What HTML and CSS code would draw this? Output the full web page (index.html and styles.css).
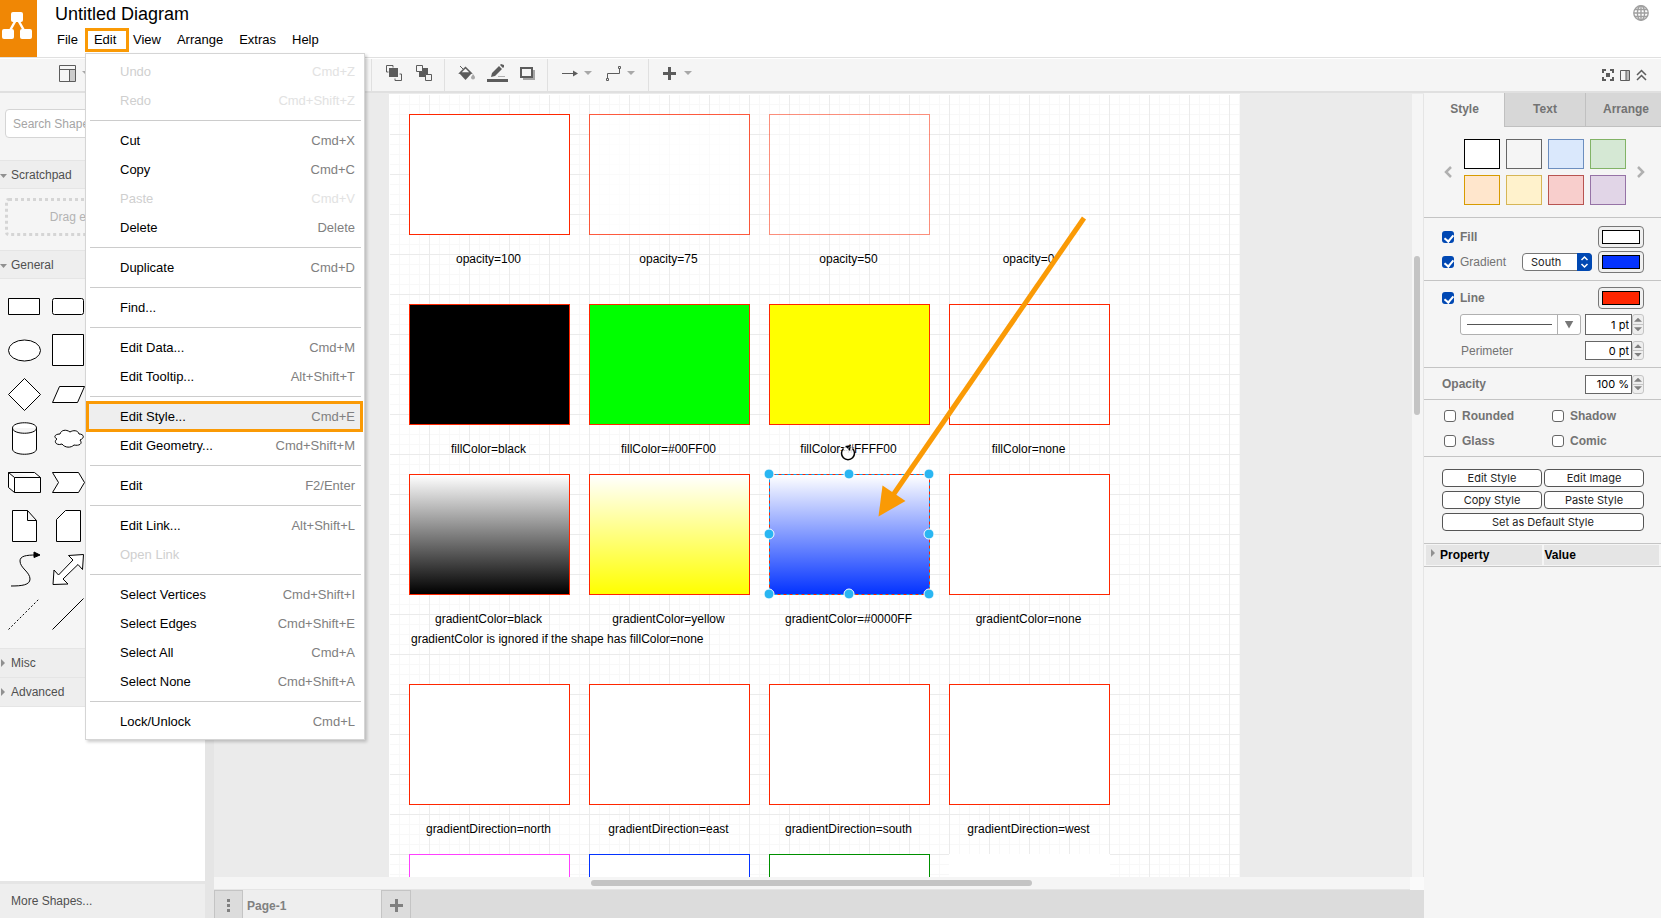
FILE: index.html
```html
<!DOCTYPE html>
<html lang="en">
<head>
<meta charset="utf-8">
<title>Untitled Diagram</title>
<link rel="stylesheet" href="styles.css">
</head>
<body>
<div class="app">
  <header class="header">
    <div class="logo">
      <svg width="37" height="57" viewBox="0 0 37 57"><path d="M17 18 8 34M17 18l9 16" stroke="#fff" stroke-width="2.5"/><g fill="#fff"><rect x="11" y="12" width="12" height="10" rx="2"/><rect x="2" y="29" width="12" height="10" rx="2"/><rect x="20" y="29" width="12" height="10" rx="2"/></g></svg>
    </div>
    <div class="heading">
      <h1 class="doc-title">Untitled Diagram</h1>
      <nav class="menubar">
        <button>File</button><button class="open">Edit</button><button>View</button><button>Arrange</button><button>Extras</button><button>Help</button>
      </nav>
    </div>
    <button class="language" aria-label="Language"><svg width="16" height="16" viewBox="0 0 16 16" fill="none" stroke="#a0a0a0" stroke-width="1.4"><circle cx="8" cy="8" r="7.2"/><ellipse cx="8" cy="8" rx="3.6" ry="7.2"/><path d="M8 1v14M1 8h14M2 4.500h12M2 11.500h12"/></svg></button>
  </header>

  <div class="toolbar">
    <div class="tools first">
      <button aria-label="View"><svg width="17" height="17" viewBox="0 0 17 17"><path d="M11 5h5v11h-5z" fill="#ccc"/><path d="M.5.5h16v16H.5zM.5 4.500h16M10.500 4.500v12" fill="none" stroke="#5c5c5c"/></svg></button>
      <i class="caret"></i>
    </div>
    <div class="tools order">
      <button aria-label="To Front"><svg width="16" height="16" viewBox="0 0 16 16"><path d="M.5 7V.5H7M9 15.500h6.500V9M.5 7h2M7 .5v2M9 15.500v-2M15.500 9h-2" fill="none" stroke="#5c5c5c"/><path d="M3 3h9v9H3z" fill="#5c5c5c"/></svg></button>
      <button aria-label="To Back"><svg width="16" height="16" viewBox="0 0 16 16"><path d="M3 3h9v9H3z" fill="#5c5c5c"/><path d="M.5.5h6v6h-6zM9.500 9.500h6v6h-6z" fill="#f5f5f5" stroke="#5c5c5c"/></svg></button>
    </div>
    <div class="tools paint">
      <button aria-label="Fill Color"><svg width="17" height="16" viewBox="0 0 17 16"><path d="M2 1l3 3" stroke="#5c5c5c"/><path d="M7.500 2.500 13 8H2z" fill="none" stroke="#5c5c5c" stroke-width="1.500"/><path d="M1 8h13l-6.500 7z" fill="#5c5c5c"/><path d="M15 9c1.500 2 2 2.500 2 3.500a2 2 0 0 1-4 0c0-1 1-1.500 2-3.500z" fill="#a8a8a8"/></svg></button>
      <button aria-label="Line Color"><svg width="21" height="18" viewBox="0 0 21 18"><path d="M4 13l1-4 7-7 3 3-7 7zM13 1l1-1 3 1v2l-1 1z" fill="#5c5c5c"/><path d="M11 12.500h7" stroke="#b0b0b0"/><path d="M0 15h21v3H0z" fill="#5c5c5c"/></svg></button>
      <button aria-label="Shadow"><svg width="15" height="13" viewBox="0 0 15 13"><path d="M3 3h12v10H3z" fill="#a5a5a5"/><path d="M1 1h11v9H1z" fill="#f5f5f5" stroke="#5c5c5c" stroke-width="2"/></svg></button>
    </div>
    <div class="tools connect">
      <button aria-label="Connection"><svg width="16" height="7" viewBox="0 0 16 7"><path d="M0 3.500h13" stroke="#5c5c5c"/><path d="M11 0.500l5 3-5 3z" fill="#5c5c5c"/></svg></button>
      <i class="caret"></i>
      <button aria-label="Waypoints"><svg width="15" height="15" viewBox="0 0 15 15" fill="none" stroke="#5c5c5c"><path d="M1.500 12V7.500h12V3"/><path d="M.5 12.500h2v2h-2zM12.500.5h2v2h-2z"/></svg></button>
      <i class="caret"></i>
    </div>
    <div class="tools insert">
      <button aria-label="Insert"><svg width="13" height="13" viewBox="0 0 13 13"><path d="M5 0h3v5h5v3H8v5H5V8H0V5h5z" fill="#5c5c5c"/></svg></button>
      <i class="caret"></i>
    </div>
    <div class="window-tools">
      <button aria-label="Fullscreen"><svg width="12" height="12" viewBox="0 0 12 12"><path d="M4 4h4v4H4z" fill="#5c5c5c"/><path d="M1 4V1h3M8 1h3v3M11 8v3H8M4 11H1V8" fill="none" stroke="#5c5c5c" stroke-width="2"/></svg></button>
      <button aria-label="Format"><svg width="10" height="11" viewBox="0 0 10 11"><path d="M6 1h3v9H6z" fill="#bbb"/><path d="M.5.5h9v10h-9zM6 .5v10" fill="none" stroke="#5c5c5c"/></svg></button>
      <button aria-label="Collapse"><svg width="11" height="12" viewBox="0 0 11 12" fill="none" stroke="#5c5c5c" stroke-width="1.500"><path d="M1 6l4.500-4.500L10 6M1 11l4.500-4.500L10 11"/></svg></button>
    </div>
  </div>

  <div class="workspace">
    <aside class="sidebar">
      <div class="search"><input type="text" placeholder="Search Shapes" aria-label="Search Shapes"></div>
      <button class="section down">Scratchpad</button>
      <div class="drop">Drag elements here</div>
      <button class="section down general">General</button>
      <div class="shapes">
        <svg viewBox="0 0 44 44"><path d="M6.500 14.500h31v16h-31z"/></svg>
        <svg viewBox="0 0 44 44"><rect x="6.500" y="14.500" width="31" height="16" rx="2"/></svg>
        <svg viewBox="0 0 44 44"><ellipse cx="22.500" cy="22.500" rx="16" ry="10.500"/></svg>
        <svg viewBox="0 0 44 44"><path d="M6.500 6.500h31v31h-31z"/></svg>
        <svg viewBox="0 0 44 44"><path d="M22.500 6.500l16 16-16 16-16-16z"/></svg>
        <svg viewBox="0 0 44 44"><path d="M6.500 30.500l7-16h25l-7 16z"/></svg>
        <svg viewBox="0 0 44 44"><path d="M10.500 12v21c0 7 24 7 24 0V12M10.500 12c0-7 24-7 24 0s-24 7-24 0z"/></svg>
        <svg viewBox="0 0 44 44"><path d="M14 18c-5 0-7 3-3 5-4 3 0 7 5 5 3 4 9 4 12 1 5 1 9-1 6-5 5-2 4-6-1-6-1-4-6-4-9-2-4-3-9-2-10 2z"/></svg>
        <svg viewBox="0 0 44 44"><path d="M6.500 12.500h26l6 5v15h-26l-6-5zM6.500 12.500l6 5h26M12.500 17.500v15"/></svg>
        <svg viewBox="0 0 44 44"><path d="M6.500 12.500h26l6 10-6 10h-26l6-10z"/></svg>
        <svg viewBox="0 0 44 44"><path d="M10.500 6.500h15l9 10v21h-24zM25.500 6.500v10h9"/></svg>
        <svg viewBox="0 0 44 44"><path d="M19.500 6.500h15v31h-24v-22z"/></svg>
        <svg viewBox="0 0 44 44"><path d="M9 38c11 0 19-1 19-7 0-7-10-11-10-18 0-5 6-6 16-6" fill="none"/><path d="M32 4l6 3-6 2.500z" fill="#000"/></svg>
        <svg viewBox="0 0 44 44"><path d="M22.500 7.500l15-1-1 15-4.500-5L17 31l5 5-15 .5 1-14.500 4.500 5L27 12z"/></svg>
        <svg viewBox="0 0 44 44"><path d="M6.500 37.500l31-31" stroke-dasharray="2 2"/></svg>
        <svg viewBox="0 0 44 44"><path d="M6.500 37.500l31-31"/></svg>
      </div>
      <button class="section right">Misc</button>
      <button class="section right">Advanced</button>
      <div class="blank"></div>
      <button class="more">More Shapes...</button>
    </aside>

    <main class="editor">
      <div class="canvas">
        <div class="page">
          <div class="node c1 r1"></div><div class="node c2 r1 o75"></div><div class="node c3 r1 o50"></div>
          <div class="node c1 r2 black"></div><div class="node c2 r2 green"></div><div class="node c3 r2 yellow"></div><div class="node c4 r2 hollow"></div>
          <div class="node c1 r3 to-black"></div><div class="node c2 r3 to-yellow"></div><div class="node c3 r3 to-blue"></div><div class="node c4 r3"></div>
          <div class="node c1 r4"></div><div class="node c2 r4"></div><div class="node c3 r4"></div><div class="node c4 r4"></div>
          <div class="node c1 r5 line-pink"></div><div class="node c2 r5 line-blue"></div><div class="node c3 r5 line-green"></div><div class="node c4 r5 line-none"></div>
          <div class="label c1 l1">opacity=100</div><div class="label c2 l1">opacity=75</div><div class="label c3 l1">opacity=50</div><div class="label c4 l1">opacity=0</div>
          <div class="label c1 l2">fillColor=black</div><div class="label c2 l2">fillColor=#00FF00</div><div class="label c3 l2">fillColor=#FFFF00</div><div class="label c4 l2">fillColor=none</div>
          <div class="label c1 l3">gradientColor=black</div><div class="label c2 l3">gradientColor=yellow</div><div class="label c3 l3">gradientColor=#0000FF</div><div class="label c4 l3">gradientColor=none</div>
          <div class="label note">gradientColor is ignored if the shape has fillColor=none</div>
          <div class="label c1 l4">gradientDirection=north</div><div class="label c2 l4">gradientDirection=east</div><div class="label c3 l4">gradientDirection=south</div><div class="label c4 l4">gradientDirection=west</div>
          <svg class="overlay" width="851" height="520" viewBox="0 0 851 520">
            <path d="M380.500 380.500h160v120h-160z" fill="none" stroke="#00a8ff" stroke-dasharray="3 3"/>
            <g fill="#29b6f2" stroke="#fff" stroke-width="1"><circle cx="380" cy="380" r="5"/><circle cx="460" cy="380" r="5"/><circle cx="540" cy="380" r="5"/><circle cx="380" cy="440" r="5"/><circle cx="540" cy="440" r="5"/><circle cx="380" cy="500" r="5"/><circle cx="460" cy="500" r="5"/><circle cx="540" cy="500" r="5"/></g>
            <circle cx="459" cy="359" r="7" fill="#fff" fill-opacity=".8"/>
            <path d="M454.500 354.500a6.500 6.500 0 1 0 9 0" fill="none" stroke="#000" stroke-width="1.500"/><path d="M456 352l6-1-1 6z" fill="#000"/><path d="M456 357l6-5" stroke="#fff" stroke-dasharray="1 1"/>
            <path d="M695 124 502 404" stroke="#fa9a05" stroke-width="5"/><path d="M489.500 422.500l4-31 23 15.500z" fill="#fa9a05"/>
          </svg>
        </div>
        <div class="scroll-y"><div class="thumb"></div></div>
      </div>
      <div class="scroll-x"><div class="thumb"></div><div class="corner"></div></div>
      <footer class="pages">
        <button class="page-menu" aria-label="Pages"><svg width="3" height="13" viewBox="0 0 3 13" fill="#808080"><path d="M0 0h3v3H0zM0 5h3v3H0zM0 10h3v3H0z"/></svg></button>
        <button class="page-tab">Page-1</button>
        <button class="page-add" aria-label="Insert Page"><svg width="13" height="13" viewBox="0 0 13 13"><path d="M5 0h3v5h5v3H8v5H5V8H0V5h5z" fill="#808080"/></svg></button>
      </footer>
    </main>

    <aside class="format">
      <div class="tabs"><button class="current">Style</button><button>Text</button><button>Arrange</button></div>
      <section class="palette">
        <button class="turn" aria-label="Previous"><svg width="8" height="12" viewBox="0 0 8 12"><path d="M7 1L2 6l5 5" fill="none" stroke="#b0b0b0" stroke-width="2.500"/></svg></button>
        <div class="swatches">
          <button class="s1" aria-label="White"></button><button class="s2" aria-label="Gray"></button><button class="s3" aria-label="Blue"></button><button class="s4" aria-label="Green"></button>
          <button class="s5" aria-label="Orange"></button><button class="s6" aria-label="Yellow"></button><button class="s7" aria-label="Red"></button><button class="s8" aria-label="Purple"></button>
        </div>
        <button class="turn" aria-label="Next"><svg width="8" height="12" viewBox="0 0 8 12"><path d="M1 1l5 5-5 5" fill="none" stroke="#b0b0b0" stroke-width="2.500"/></svg></button>
      </section>
      <section class="fill">
        <div class="row"><label class="grow bold"><input type="checkbox" checked>Fill</label><button class="color" aria-label="Fill color"><i class="white"></i></button></div>
        <div class="row"><label class="grow"><input type="checkbox" checked>Gradient</label><span class="select"><select aria-label="Gradient direction"><option>South</option></select><svg width="15" height="18" viewBox="0 0 15 18"><path d="M4.500 7l3-3 3 3M4.500 11l3 3 3-3" fill="none" stroke="#fff" stroke-width="1.500"/></svg></span><button class="color" aria-label="Gradient color"><i class="blue"></i></button></div>
      </section>
      <section class="line">
        <div class="row"><label class="grow bold"><input type="checkbox" checked>Line</label><button class="color" aria-label="Line color"><i class="red"></i></button></div>
        <div class="row stroke"><button class="pattern" aria-label="Line pattern"><span></span><i></i></button><div class="number"><input type="text" value="1 pt" aria-label="Line width"><span class="steps"><i class="up"></i><i class="dn"></i></span></div></div>
        <div class="row perimeter"><label class="grow" for="perimeter">Perimeter</label><div class="number"><input type="text" id="perimeter" value="0 pt"><span class="steps"><i class="up"></i><i class="dn"></i></span></div></div>
      </section>
      <section class="opacity">
        <div class="row"><label class="grow bold" for="opacity">Opacity</label><div class="number"><input type="text" id="opacity" value="100 %"><span class="steps"><i class="up"></i><i class="dn"></i></span></div></div>
      </section>
      <section class="effects">
        <label class="bold"><input type="checkbox">Rounded</label><label class="bold"><input type="checkbox">Shadow</label>
        <label class="bold"><input type="checkbox">Glass</label><label class="bold"><input type="checkbox">Comic</label>
      </section>
      <section class="actions">
        <button>Edit Style</button><button>Edit Image</button><button>Copy Style</button><button>Paste Style</button><button class="wide">Set as Default Style</button>
      </section>
      <table class="props"><tr><th>Property</th><th>Value</th></tr></table>
    </aside>
  </div>

  <div class="menu">
    <button disabled><span>Undo</span><kbd>Cmd+Z</kbd></button>
    <button disabled><span>Redo</span><kbd>Cmd+Shift+Z</kbd></button>
    <hr>
    <button><span>Cut</span><kbd>Cmd+X</kbd></button>
    <button><span>Copy</span><kbd>Cmd+C</kbd></button>
    <button disabled><span>Paste</span><kbd>Cmd+V</kbd></button>
    <button><span>Delete</span><kbd>Delete</kbd></button>
    <hr>
    <button><span>Duplicate</span><kbd>Cmd+D</kbd></button>
    <hr>
    <button><span>Find...</span></button>
    <hr>
    <button><span>Edit Data...</span><kbd>Cmd+M</kbd></button>
    <button><span>Edit Tooltip...</span><kbd>Alt+Shift+T</kbd></button>
    <hr>
    <button class="active"><span>Edit Style...</span><kbd>Cmd+E</kbd></button>
    <button><span>Edit Geometry...</span><kbd>Cmd+Shift+M</kbd></button>
    <hr>
    <button><span>Edit</span><kbd>F2/Enter</kbd></button>
    <hr>
    <button><span>Edit Link...</span><kbd>Alt+Shift+L</kbd></button>
    <button disabled><span>Open Link</span></button>
    <hr>
    <button><span>Select Vertices</span><kbd>Cmd+Shift+I</kbd></button>
    <button><span>Select Edges</span><kbd>Cmd+Shift+E</kbd></button>
    <button><span>Select All</span><kbd>Cmd+A</kbd></button>
    <button><span>Select None</span><kbd>Cmd+Shift+A</kbd></button>
    <hr>
    <button><span>Lock/Unlock</span><kbd>Cmd+L</kbd></button>
  </div>
</div>
</body>
</html>
```
FILE: styles.css
```css
* { box-sizing: border-box; }
body { margin: 0; font: 13px/16px "Liberation Sans", Arial, sans-serif; color: #000; }
button { font: inherit; color: inherit; background: none; border: 0; padding: 0; margin: 0; white-space: nowrap; }
svg { display: block; }
.app { position: relative; display: flex; flex-direction: column; height: 100vh; overflow: hidden; }

/* Header */
.header { display: flex; height: 58px; flex: none; border-bottom: 1px solid #e0e0e0; background: #fff; }
.logo { width: 37px; background: #f08705; }
.heading { flex: 1; padding: 3px 0 0 18px; }
.doc-title { margin: 0; font-size: 18px; line-height: 22px; font-weight: 400; }
.menubar { display: flex; padding-top: 3px; margin-left: -6px; }
.menubar button { height: 24px; padding: 0 8px; }
.menubar .open { border: 3px solid #fa9a05; padding: 0 6px; margin: 0 -4px 0 -1px; width: 44px; text-align: left; }
.language { align-self: flex-start; margin: 5px 12px 0 0; }

/* Toolbar */
.toolbar { display: flex; flex: none; height: 35px; background: #f5f5f5; border-top: 1px solid #fff; border-bottom: 2px solid #e0e0e0; }
.tools { display: flex; align-items: center; padding-bottom: 4px; }
.tools + .tools { border-left: 1px solid #e0e0e0; }
.caret { width: 8px; height: 4px; background: #a8a8a8; clip-path: polygon(0 0, 100% 0, 50% 100%); }
.first { width: 371px; padding-left: 59px; gap: 6px; }
.order { width: 73px; padding-left: 14px; gap: 14px; }
.paint { width: 103px; padding-left: 13px; gap: 12px; }
.connect { width: 101px; padding-left: 14px; gap: 6px; }
.connect .caret + button { margin-left: 8px; }
.insert { flex: 1; padding-left: 14px; gap: 8px; }
.window-tools { display: flex; align-items: center; gap: 6px; padding-right: 14px; }

.workspace { display: flex; flex: 1; min-height: 0; }

/* Shape library */
.sidebar { width: 214px; flex: none; display: flex; flex-direction: column; background: #f5f5f5; border-right: 9px solid #e5e5e5; color: #505050; font-size: 12px; }
.search { padding: 16px 5px 22px; }
.search input { width: 100%; height: 29px; padding: 0 7px; border: 1px solid #d5d5d5; border-radius: 4px; font: 12px "Liberation Sans", Arial, sans-serif; background: #fff; }
.search input::placeholder { color: #a5a5a5; }
.section { position: relative; flex: none; height: 29px; padding-left: 11px; text-align: left; background: #eee; border-top: 1px solid #e5e5e5; }
.section.down { border-bottom: 1px solid #e5e5e5; }
.section::before { content: ""; position: absolute; background: #909090; }
.section.down::before { left: 0; top: 13px; width: 7px; height: 4px; clip-path: polygon(0 0, 100% 0, 50% 100%); }
.section.right::before { left: 1px; top: 10px; width: 4px; height: 8px; clip-path: polygon(0 0, 100% 50%, 0 100%); }
.drop { height: 38px; margin: 9px 5px 14px; border: 3px dotted #d5d5d5; border-radius: 4px; line-height: 32px; text-align: center; color: #b3b3b3; }
.shapes { display: grid; grid-template-columns: 44px 44px; padding: 5px 2px 12px; }
.shapes svg { width: 44px; height: 44px; fill: #fff; stroke: #000; }
.blank { flex: 1; background: #fff; border-top: 1px solid #e5e5e5; }
.more { height: 37px; flex: none; padding: 0 0 0 11px; text-align: left; background: #eee; border-top: 3px solid #e5e5e5; }

/* Drawing area */
.editor { flex: 1; min-width: 0; display: flex; flex-direction: column; background: #ebebeb; }
.canvas { flex: 1; min-height: 0; display: flex; justify-content: space-between; padding: 1px 0 0 175px; overflow: hidden; }
.page { position: relative; width: 851px; flex: none; overflow: hidden; background-color: #fff;
  background-image: linear-gradient(90deg, #ebebeb 1px, transparent 1px), linear-gradient(#ebebeb 1px, transparent 1px), linear-gradient(90deg, #f8f8f8 1px, transparent 1px), linear-gradient(#f8f8f8 1px, transparent 1px);
  background-size: 40px 40px, 40px 40px, 10px 10px, 10px 10px; box-shadow: inset 1px 1px #fff; }
.node { position: absolute; width: 161px; height: 121px; border: 1px solid #ff2600; background: #fff; }
.label { position: absolute; width: 159px; text-align: center; font-size: 12px; line-height: 14px; white-space: nowrap; }
.c1 { left: 20px; } .c2 { left: 200px; } .c3 { left: 380px; } .c4 { left: 560px; }
.r1 { top: 20px; } .r2 { top: 210px; } .r3 { top: 380px; } .r4 { top: 590px; } .r5 { top: 760px; }
.l1 { top: 158px; } .l2 { top: 348px; } .l3 { top: 518px; } .l4 { top: 728px; }
.note { left: 22px; top: 538px; width: auto; }
.o75 { opacity: .75; }
.o50 { opacity: .5; }
.black { background: #000; }
.green { background: #0f0; }
.yellow { background: #ff0; }
.hollow { background: none; }
.to-black { background: linear-gradient(#fff, #000); }
.to-yellow { background: linear-gradient(#fff, #ff0); }
.to-blue { background: linear-gradient(#fff, #0433ff); }
.line-pink { border-color: #ff40ff; }
.line-blue { border-color: #0433ff; }
.line-green { border-color: #008f00; }
.line-none { border-color: #fff; }
.overlay { position: absolute; left: 0; top: 0; }
.scroll-y { width: 12px; flex: none; background: #f5f5f5; border-right: 1px solid #e5e5e5; padding: 162px 3px 0 2px; }
.scroll-y .thumb { height: 159px; border-radius: 3px; background: #c4c4c4; }
.scroll-x { display: flex; justify-content: space-between; height: 13px; flex: none; background: #f5f5f5; border-bottom: 1px solid #e5e5e5; padding-left: 377px; }
.scroll-x .thumb { width: 441px; height: 6px; margin-top: 3px; border-radius: 3px; background: #c4c4c4; }
.corner { width: 14px; height: 13px; background: #fafafa; }
.pages { display: flex; height: 28px; flex: none; background: #dcdcdc; color: #808080; }
.page-menu, .page-add { display: flex; align-items: center; justify-content: center; width: 30px; padding-top: 2px; border: 1px solid #c4c4c4; border-bottom: 0; }
.page-menu { width: 29px; }
.page-tab { width: 138px; padding: 4px 0 0 4px; text-align: left; font-weight: 700; font-size: 12px; background: #eee; }

/* Format panel */
.format { width: 237px; flex: none; overflow: hidden; background: #f5f5f5; color: #737373; font-size: 12px; }
.format section { border-bottom: 1px solid #c4c4c4; padding: 8px 17px 7px 18px; }
.tabs { display: flex; height: 34px; font-weight: 700; }
.tabs button { flex: 0 0 81px; padding-bottom: 2px; background: #d7d7d7; border-left: 1px solid #c0c0c0; border-bottom: 1px solid #c0c0c0; }
.tabs .current { flex-basis: 80px; background: #f5f5f5; border-color: transparent; }
.format .palette { display: flex; align-items: center; justify-content: space-between; padding: 12px 16px 12px 20px; }
.swatches { display: grid; grid-template-columns: repeat(4, 36px); grid-auto-rows: 30px; gap: 6px; }
.swatches button { border: 1px solid; }
.s1 { background: #fff; border-color: #000 !important; }
.s2 { background: #f5f5f5; border-color: #666 !important; }
.s3 { background: #dae8fc; border-color: #6c8ebf !important; }
.s4 { background: #d5e8d4; border-color: #82b366 !important; }
.s5 { background: #ffe6cc; border-color: #d79b00 !important; }
.s6 { background: #fff2cc; border-color: #d6b656 !important; }
.s7 { background: #f8cecc; border-color: #b85450 !important; }
.s8 { background: #e1d5e7; border-color: #9673a6 !important; }
.row { display: flex; align-items: center; height: 22px; }
.row + .row { margin-top: 3px; }
.grow { flex: 1; }
.bold { font-weight: 700; }
.format label { display: flex; align-items: center; }
.format input[type="checkbox"] { appearance: none; width: 12px; height: 12px; margin: 0 6px 0 0; border: 1px solid #666; border-radius: 3px; background: #fff; }
.format input[type="checkbox"]:checked { border: 0; background: #0048b3; position: relative; }
.format input[type="checkbox"]:checked::after { content: ""; position: absolute; left: 4px; top: 2px; width: 4px; height: 7px; border: solid #fff; border-width: 0 2px 2px 0; transform: rotate(40deg); }
.color { width: 46px; height: 22px; padding: 3px; border: 1px solid #777; border-radius: 4px; background: #f0f0f0; }
.color i { display: block; height: 14px; border: 1px solid #000; }
.white { background: #fff; } .blue { background: #0433ff; } .red { background: #ff2600; }
.select { position: relative; margin-right: 6px; }
.select select { appearance: none; display: block; width: 70px; height: 18px; padding: 0 8px; border: 1px solid #777; border-radius: 4px; background: #fff; font: 11px Inter, sans-serif; color: #222; }
.select svg { position: absolute; right: 0; top: 0; background: #0048b3; border-radius: 0 4px 4px 0; pointer-events: none; }
.format .line { padding: 6px 17px 7px 18px; }
.format .row.stroke { margin: 5px 0 0 18px; gap: 4px; height: 21px; }
.pattern { display: flex; align-items: center; flex: 1; height: 21px; padding-left: 6px; border: 1px solid #b0b0b0; border-radius: 3px; background: #fff; }
.pattern span { flex: 1; height: 1px; background: #555; }
.pattern i { width: 23px; height: 19px; margin-left: 5px; border-left: 1px solid #b0b0b0; display: flex; align-items: center; justify-content: center; }
.pattern i::after { content: ""; width: 9px; height: 8px; background: #777; clip-path: polygon(0 0, 100% 0, 50% 100%); }
.number { display: flex; width: 59px; height: 19px; }
.stroke .number { height: 21px; }
.number input { width: 47px; height: 100%; padding: 0 2px 0 0; border: 1px solid #666; text-align: right; background: #fff; color: #000; font: 11px Inter, sans-serif; }
.steps { flex: 1; display: flex; flex-direction: column; align-items: center; justify-content: space-around; border: 1px solid #c4c4c4; border-radius: 3px; background: linear-gradient(#eee 48%, #c4c4c4 48%, #c4c4c4 54%, #eee 54%); }
.steps i { width: 8px; height: 4px; background: #808080; }
.steps .up { clip-path: polygon(50% 0, 100% 100%, 0 100%); }
.steps .dn { clip-path: polygon(0 0, 100% 0, 50% 100%); }
.format .row.perimeter { height: 19px; margin: 6px 0 0; padding-left: 19px; }
.format .opacity { padding: 6px 17px 5px 18px; }
.opacity .row { height: 20px; }
.format .effects { display: grid; grid-template-columns: 108px 1fr; row-gap: 9px; padding: 8px 17px 7px 20px; }
.format .actions { display: grid; grid-template-columns: 1fr 1fr; gap: 4px 2px; padding: 12px 17px 12px 18px; }
.actions button { height: 18px; border: 1px solid #555; border-radius: 4px; background: #fff; color: #222; font: 11px/16px Inter, sans-serif; }
.actions .wide { grid-column: span 2; }
.props { width: 100%; table-layout: fixed; border-spacing: 2px 1px; border-bottom: 1px solid #c4c4c4; color: #000; }
.props th { position: relative; height: 20px; padding: 0 0 0 1px; text-align: left; background: #e5e5e5; }
.props th:first-child { padding-left: 14px; }
.props th:first-child::before { content: ""; position: absolute; left: 5px; top: 4px; width: 4px; height: 8px; background: #909090; clip-path: polygon(0 0, 100% 50%, 0 100%); }

/* Edit menu */
.menu { position: absolute; left: 85px; top: 53px; width: 280px; padding: 3px 2px 3px 1px; background: #fff; border: 1px solid #d5d5d5; box-shadow: 2px 2px 3px rgba(0, 0, 0, .2); }
.menu button { display: flex; justify-content: space-between; align-items: center; width: 100%; height: 29px; padding: 0 7px 0 33px; }
.menu kbd { font: inherit; color: #808080; }
.menu button:disabled { color: #cfcfcf; }
.menu button:disabled kbd { color: #e2e2e2; }
.menu .active { background: #eee; outline: 3px solid #fa9a05; outline-offset: -2px; }
.menu hr { height: 1px; margin: 5px 1px 5px 3px; border: 0; background: #ccc; }
```
